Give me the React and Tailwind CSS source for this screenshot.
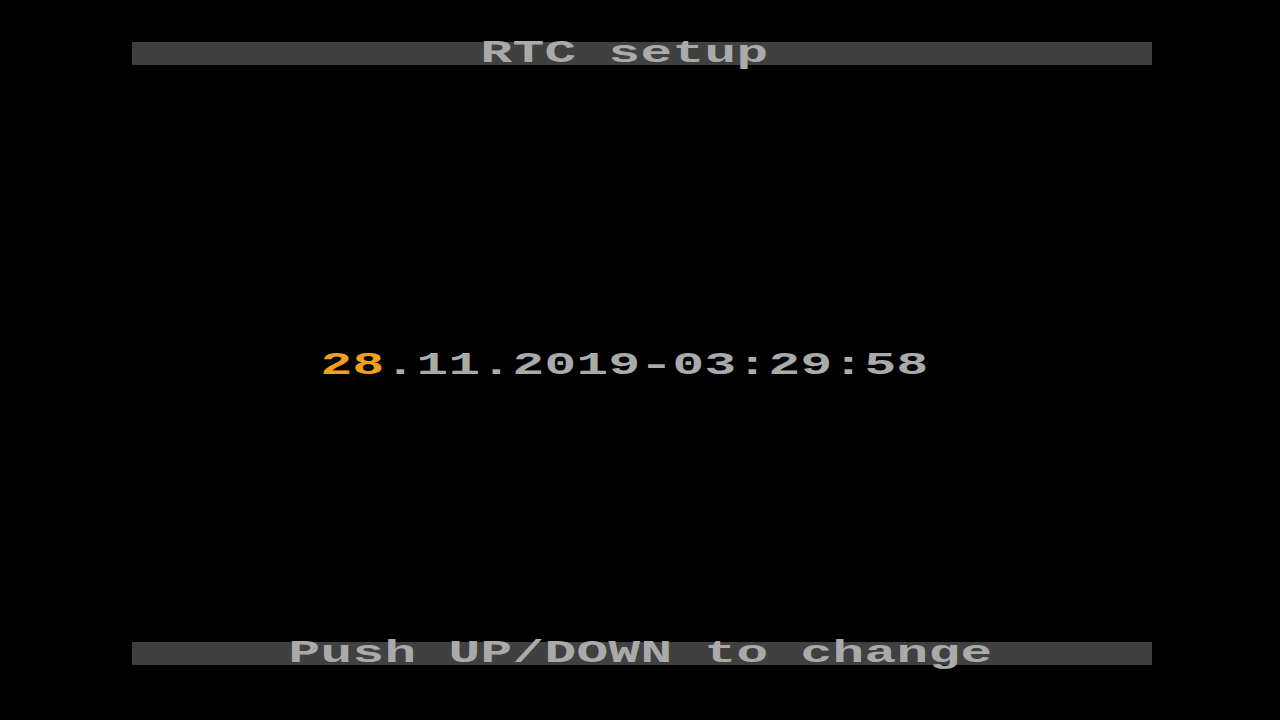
const GRAY = 'text-[#aaaaaa]'

function Cells({ text, color = GRAY }) {
  return (
    <>
      {text.split('').map((ch, i) => (
        <span key={i} className={`inline-block w-[32px] text-center ${color}`}>
          <span className={`inline-block ${ch === '-' ? 'scale-x-[1.9]' : 'scale-x-[1.7]'}`}>
            {ch === ' ' ? '\u00a0' : ch}
          </span>
        </span>
      ))}
    </>
  )
}

export default function App() {
  return (
    <div
      className="w-[1280px] h-[720px] bg-black flex flex-col pl-[132px] pr-[128px] pt-[42px] overflow-hidden"
      style={{ fontFamily: '"Liberation Mono", "DejaVu Sans Mono", monospace' }}
    >
      {/* title bar */}
      <div className="h-[23px] bg-[#404040] flex items-center pl-[348px] text-[31px] font-bold leading-[23px]">
        <Cells text="RTC setup" />
      </div>

      {/* date / time */}
      <div className="mt-[289px] h-[24px] flex items-center pl-[188px] text-[31px] font-bold leading-[24px]">
        <Cells text="28" color="text-[#f0a020]" />
        <Cells text=".11.2019-03:29:58" />
      </div>

      {/* hint bar */}
      <div className="mt-[264px] h-[23px] bg-[#404040] flex items-center pl-[156px] text-[31px] font-bold leading-[23px]">
        <Cells text="Push UP/DOWN to change" />
      </div>
    </div>
  )
}
